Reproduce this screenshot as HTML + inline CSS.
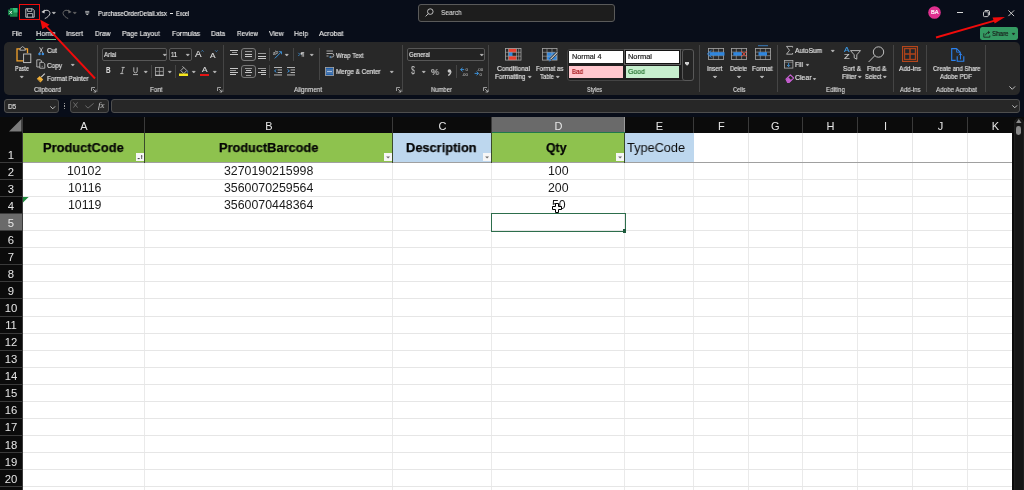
<!DOCTYPE html><html><head><meta charset="utf-8"><style>
html,body{margin:0;padding:0;}
body{width:1024px;height:490px;overflow:hidden;position:relative;background:#080d19;font-family:"Liberation Sans",sans-serif;}
.t{position:absolute;white-space:nowrap;line-height:1;transform-origin:0 0;will-change:transform;}
svg{position:absolute;overflow:visible;}
div{position:absolute;}
</style></head><body>
<svg style="left:8px;top:8px" width="9.5" height="9" viewBox="0 0 9.5 9"><rect x="2" y="0" width="7.5" height="8.8" rx="0.6" fill="#1c8a4c"/><path d="M5 0h3.9a0.6 0.6 0 0 1 0.6 0.6V4.4H5z" fill="#33c07a"/><rect x="0" y="1.6" width="5.4" height="5.6" rx="0.5" fill="#107c41"/><path d="M1.4 2.9l2.6 3M4 2.9l-2.6 3" stroke="#e8f5ec" stroke-width="0.85"/></svg>
<svg style="left:24.5px;top:8px" width="10" height="10" viewBox="0 0 10 10"><path d="M0.8 0.8h6.7l1.7 1.7v6.7H0.8z" fill="none" stroke="#d2d2d2" stroke-width="0.9"/><path d="M2.6 0.8v2.6h4.2V0.8" fill="none" stroke="#d2d2d2" stroke-width="0.8"/><path d="M2.3 9.2V5.6h5.4v3.6" fill="none" stroke="#d2d2d2" stroke-width="0.8"/></svg>
<div style="position:absolute;left:19.00px;top:3.50px;width:21.00px;height:16.00px;box-sizing:border-box;border:1.7px solid #f00b0b;"></div>
<svg style="left:41px;top:8.5px" width="10" height="10" viewBox="0 0 10 10"><path d="M2.8 2.2C5.6 0.2 9.2 1.6 8.9 4.6 8.6 6.6 6.4 8.4 3.8 9.6" fill="none" stroke="#d2d2d2" stroke-width="0.95"/><path d="M0.4 2.9L3.9 0.6 3.5 4.4z" fill="#d2d2d2"/></svg>
<svg style="left:52.4px;top:11.5px" width="4.1" height="2.4" viewBox="0 0 4.1 2.4"><path d="M0.2 0.3L3.50 0.3L1.85 2.1z" fill="#c8c8c8" stroke="#c8c8c8" stroke-width="0.5" stroke-linejoin="round"/></svg>
<svg style="left:61.5px;top:8.5px" width="10" height="10" viewBox="0 0 10 10"><path d="M7.2 2.2C4.4 0.2 0.8 1.6 1.1 4.6 1.4 6.6 3.6 8.4 6.2 9.6" fill="none" stroke="#6a6a6a" stroke-width="0.95"/><path d="M9.6 2.9L6.1 0.6 6.5 4.4z" fill="#6a6a6a"/></svg>
<svg style="left:73.1px;top:11.5px" width="3.9" height="2.4" viewBox="0 0 3.9 2.4"><path d="M0.2 0.3L3.30 0.3L1.75 2.1z" fill="#6a6a6a" stroke="#6a6a6a" stroke-width="0.5" stroke-linejoin="round"/></svg>
<svg style="left:84.7px;top:10.6px" width="4.5" height="4.5" viewBox="0 0 4.5 4.5"><path d="M0.2 0.4h4.1M0.2 1.8h4.1" stroke="#d8d8d8" stroke-width="0.75"/><path d="M0.6 2.7L2.25 4.3 3.9 2.7z" fill="#d8d8d8"/></svg>
<div class="t" style="left:98.00px;top:9.59px;font-size:7.0px;color:#e6e6e6;font-weight:normal;transform:scaleX(0.869);-webkit-text-stroke:0.18px #e6e6e6;">PurchaseOrderDetail.xlsx</div>
<div style="position:absolute;left:170.30px;top:13.20px;width:2.50px;height:0.80px;background:#e6e6e6;"></div>
<div class="t" style="left:176.00px;top:9.59px;font-size:7.0px;color:#e6e6e6;font-weight:normal;transform:scaleX(0.760);-webkit-text-stroke:0.18px #e6e6e6;">Excel</div>
<div style="position:absolute;left:418.00px;top:4.00px;width:196.50px;height:17.50px;box-sizing:border-box;border:1.2px solid #5a5a5a;border-radius:3px;background:#1d1d1d;"></div>
<svg style="left:424.8px;top:8.2px" width="9" height="9" viewBox="0 0 9 9"><circle cx="5.3" cy="3.6" r="2.8" fill="none" stroke="#cfcfcf" stroke-width="0.9"/><path d="M3.3 5.7L0.6 8.4" stroke="#cfcfcf" stroke-width="0.9"/></svg>
<div class="t" style="left:440.50px;top:8.79px;font-size:7.8px;color:#cfcfcf;font-weight:normal;transform:scaleX(0.842);-webkit-text-stroke:0.18px #cfcfcf;">Search</div>
<svg style="left:928px;top:6px" width="13" height="13" viewBox="0 0 13 13"><circle cx="6.5" cy="6.5" r="6.3" fill="#e0308f"/></svg>
<div class="t" style="left:930.80px;top:9.88px;font-size:5.5px;color:#fff;font-weight:normal;transform:scaleX(1.022);-webkit-text-stroke:0.18px #fff;">BA</div>
<div style="position:absolute;left:957.00px;top:12.20px;width:6.00px;height:0.90px;background:#d8d8d8;"></div>
<svg style="left:982.5px;top:9.5px" width="7" height="7" viewBox="0 0 7 7"><rect x="0.5" y="1.8" width="4.8" height="4.8" rx="0.9" fill="none" stroke="#d8d8d8" stroke-width="0.9"/><path d="M1.8 0.5h3.4a1.3 1.3 0 0 1 1.3 1.3v3.4" fill="none" stroke="#d8d8d8" stroke-width="0.9"/></svg>
<svg style="left:1008px;top:9.5px" width="6.5" height="6.5" viewBox="0 0 6.5 6.5"><path d="M0.4 0.4l5.7 5.7M6.1 0.4l-5.7 5.7" stroke="#d8d8d8" stroke-width="0.9"/></svg>
<div style="position:absolute;left:980.00px;top:27.00px;width:37.50px;height:13.00px;background:#359b63;border-radius:2.5px;"></div>
<svg style="left:982.5px;top:29.5px" width="8" height="8" viewBox="0 0 8 8"><path d="M0.8 3.2v4h6V5.5" fill="none" stroke="#1a1a1a" stroke-width="0.8"/><path d="M2.5 5.3C2.8 3.3 4.3 2.4 6.4 2.4M5 0.9l1.6 1.5L5 3.9" fill="none" stroke="#1a1a1a" stroke-width="0.8"/></svg>
<div class="t" style="left:991.50px;top:30.24px;font-size:7.4px;color:#1a1a1a;font-weight:normal;transform:scaleX(0.836);-webkit-text-stroke:0.18px #1a1a1a;">Share</div>
<svg style="left:1011.5px;top:33.199999999999996px" width="3.4" height="2.4" viewBox="0 0 3.4 2.4"><path d="M0.2 0.3L2.80 0.3L1.50 2.1z" fill="#1a1a1a" stroke="#1a1a1a" stroke-width="0.5" stroke-linejoin="round"/></svg>
<div class="t" style="left:12.00px;top:30.31px;font-size:7.6px;color:#e6e6e6;font-weight:normal;transform:scaleX(0.817);-webkit-text-stroke:0.18px #e6e6e6;">File</div>
<div class="t" style="left:36.00px;top:30.31px;font-size:7.6px;color:#e6e6e6;font-weight:normal;transform:scaleX(0.962);-webkit-text-stroke:0.18px #e6e6e6;">Home</div>
<div class="t" style="left:66.00px;top:30.31px;font-size:7.6px;color:#e6e6e6;font-weight:normal;transform:scaleX(0.894);-webkit-text-stroke:0.18px #e6e6e6;">Insert</div>
<div class="t" style="left:95.00px;top:30.31px;font-size:7.6px;color:#e6e6e6;font-weight:normal;transform:scaleX(0.873);-webkit-text-stroke:0.18px #e6e6e6;">Draw</div>
<div class="t" style="left:122.00px;top:30.31px;font-size:7.6px;color:#e6e6e6;font-weight:normal;transform:scaleX(0.890);-webkit-text-stroke:0.18px #e6e6e6;">Page Layout</div>
<div class="t" style="left:172.00px;top:30.31px;font-size:7.6px;color:#e6e6e6;font-weight:normal;transform:scaleX(0.890);-webkit-text-stroke:0.18px #e6e6e6;">Formulas</div>
<div class="t" style="left:211.00px;top:30.31px;font-size:7.6px;color:#e6e6e6;font-weight:normal;transform:scaleX(0.884);-webkit-text-stroke:0.18px #e6e6e6;">Data</div>
<div class="t" style="left:237.00px;top:30.31px;font-size:7.6px;color:#e6e6e6;font-weight:normal;transform:scaleX(0.842);-webkit-text-stroke:0.18px #e6e6e6;">Review</div>
<div class="t" style="left:268.60px;top:30.31px;font-size:7.6px;color:#e6e6e6;font-weight:normal;transform:scaleX(0.899);-webkit-text-stroke:0.18px #e6e6e6;">View</div>
<div class="t" style="left:294.00px;top:30.31px;font-size:7.6px;color:#e6e6e6;font-weight:normal;transform:scaleX(0.896);-webkit-text-stroke:0.18px #e6e6e6;">Help</div>
<div class="t" style="left:319.40px;top:30.31px;font-size:7.6px;color:#e6e6e6;font-weight:normal;transform:scaleX(0.935);-webkit-text-stroke:0.18px #e6e6e6;">Acrobat</div>
<div style="position:absolute;left:36.00px;top:38.50px;width:20.00px;height:1.30px;background:#6cbd8c;"></div>
<div style="position:absolute;left:4.00px;top:41.50px;width:1015.50px;height:53.00px;background:#282828;border-radius:5px;"></div>
<div style="position:absolute;left:97.00px;top:44.50px;width:1.00px;height:47.50px;background:#454545;"></div>
<div style="position:absolute;left:223.00px;top:44.50px;width:1.00px;height:47.50px;background:#454545;"></div>
<div style="position:absolute;left:402.00px;top:44.50px;width:1.00px;height:47.50px;background:#454545;"></div>
<div style="position:absolute;left:488.00px;top:44.50px;width:1.00px;height:47.50px;background:#454545;"></div>
<div style="position:absolute;left:699.00px;top:44.50px;width:1.00px;height:47.50px;background:#454545;"></div>
<div style="position:absolute;left:777.00px;top:44.50px;width:1.00px;height:47.50px;background:#454545;"></div>
<div style="position:absolute;left:892.50px;top:44.50px;width:1.00px;height:47.50px;background:#454545;"></div>
<div style="position:absolute;left:926.00px;top:44.50px;width:1.00px;height:47.50px;background:#454545;"></div>
<div style="position:absolute;left:985.00px;top:44.50px;width:1.00px;height:47.50px;background:#454545;"></div>
<div class="t" style="left:34.00px;top:86.29px;font-size:7.0px;color:#d6d6d6;font-weight:normal;transform:scaleX(0.901);-webkit-text-stroke:0.18px #d6d6d6;">Clipboard</div>
<div class="t" style="left:150.00px;top:86.29px;font-size:7.0px;color:#d6d6d6;font-weight:normal;transform:scaleX(0.892);-webkit-text-stroke:0.18px #d6d6d6;">Font</div>
<div class="t" style="left:294.00px;top:86.29px;font-size:7.0px;color:#d6d6d6;font-weight:normal;transform:scaleX(0.899);-webkit-text-stroke:0.18px #d6d6d6;">Alignment</div>
<div class="t" style="left:431.00px;top:86.29px;font-size:7.0px;color:#d6d6d6;font-weight:normal;transform:scaleX(0.843);-webkit-text-stroke:0.18px #d6d6d6;">Number</div>
<div class="t" style="left:587.00px;top:86.29px;font-size:7.0px;color:#d6d6d6;font-weight:normal;transform:scaleX(0.787);-webkit-text-stroke:0.18px #d6d6d6;">Styles</div>
<div class="t" style="left:732.50px;top:86.29px;font-size:7.0px;color:#d6d6d6;font-weight:normal;transform:scaleX(0.803);-webkit-text-stroke:0.18px #d6d6d6;">Cells</div>
<div class="t" style="left:826.00px;top:86.29px;font-size:7.0px;color:#d6d6d6;font-weight:normal;transform:scaleX(0.888);-webkit-text-stroke:0.18px #d6d6d6;">Editing</div>
<div class="t" style="left:899.50px;top:86.29px;font-size:7.0px;color:#d6d6d6;font-weight:normal;transform:scaleX(0.864);-webkit-text-stroke:0.18px #d6d6d6;">Add-ins</div>
<div class="t" style="left:935.50px;top:86.29px;font-size:7.0px;color:#d6d6d6;font-weight:normal;transform:scaleX(0.893);-webkit-text-stroke:0.18px #d6d6d6;">Adobe Acrobat</div>
<svg style="left:91px;top:87px" width="5.5" height="5.5" viewBox="0 0 5.5 5.5"><path d="M0.5 4V0.5H4" stroke="#b8b8b8" stroke-width="0.8" fill="none"/><path d="M1.8 1.8l3.2 3.2M5 2.6V5H2.6" stroke="#b8b8b8" stroke-width="0.8" fill="none"/></svg>
<svg style="left:217px;top:87px" width="5.5" height="5.5" viewBox="0 0 5.5 5.5"><path d="M0.5 4V0.5H4" stroke="#b8b8b8" stroke-width="0.8" fill="none"/><path d="M1.8 1.8l3.2 3.2M5 2.6V5H2.6" stroke="#b8b8b8" stroke-width="0.8" fill="none"/></svg>
<svg style="left:396px;top:87px" width="5.5" height="5.5" viewBox="0 0 5.5 5.5"><path d="M0.5 4V0.5H4" stroke="#b8b8b8" stroke-width="0.8" fill="none"/><path d="M1.8 1.8l3.2 3.2M5 2.6V5H2.6" stroke="#b8b8b8" stroke-width="0.8" fill="none"/></svg>
<svg style="left:483px;top:87px" width="5.5" height="5.5" viewBox="0 0 5.5 5.5"><path d="M0.5 4V0.5H4" stroke="#b8b8b8" stroke-width="0.8" fill="none"/><path d="M1.8 1.8l3.2 3.2M5 2.6V5H2.6" stroke="#b8b8b8" stroke-width="0.8" fill="none"/></svg>
<svg style="left:15px;top:45.5px" width="18" height="18" viewBox="0 0 18 18"><path d="M5.2 2.8H2v12h6.2" fill="none" stroke="#f3a32c" stroke-width="1.3"/><path d="M9.8 2.8H12.5v4.4" fill="none" stroke="#f3a32c" stroke-width="1.3"/><path d="M4.8 4.2l0.6-2 2.2-1.6 2.2 1.6 0.6 2z" fill="none" stroke="#c9c9c9" stroke-width="0.8"/><rect x="8.6" y="8" width="7.2" height="8.6" fill="#282828" stroke="#c9c9c9" stroke-width="0.9"/></svg>
<div class="t" style="left:15.00px;top:65.29px;font-size:7.0px;color:#e0e0e0;font-weight:normal;transform:scaleX(0.782);-webkit-text-stroke:0.18px #e0e0e0;">Paste</div>
<svg style="left:19.8px;top:76.2px" width="3.9" height="2.4" viewBox="0 0 3.9 2.4"><path d="M0.2 0.3L3.30 0.3L1.75 2.1z" fill="#c8c8c8" stroke="#c8c8c8" stroke-width="0.5" stroke-linejoin="round"/></svg>
<svg style="left:37.5px;top:46.5px" width="6.5" height="9" viewBox="0 0 6.5 9"><path d="M1.6 0.3l3.2 5.6M4.8 0.3L1.6 5.9" stroke="#cfcfcf" stroke-width="0.8"/><circle cx="1.5" cy="7" r="1.25" fill="#3a8ee0"/><circle cx="4.9" cy="7" r="1.25" fill="#3a8ee0"/></svg>
<div class="t" style="left:47.00px;top:47.39px;font-size:7.0px;color:#e0e0e0;font-weight:normal;transform:scaleX(0.918);-webkit-text-stroke:0.18px #e0e0e0;">Cut</div>
<svg style="left:35.8px;top:58.8px" width="10" height="10" viewBox="0 0 10 10"><path d="M0.8 0.8h3.6l1 1v6.2H0.8z" fill="none" stroke="#cfcfcf" stroke-width="0.8"/><path d="M3.8 3.3h3.4l1.6 1.6v4.3H3.8z" fill="#282828" stroke="#cfcfcf" stroke-width="0.8"/><path d="M6.2 6.8v1.3" stroke="#cfcfcf" stroke-width="0.6"/></svg>
<div class="t" style="left:47.00px;top:61.59px;font-size:7.0px;color:#e0e0e0;font-weight:normal;transform:scaleX(0.918);-webkit-text-stroke:0.18px #e0e0e0;">Copy</div>
<svg style="left:71px;top:63.6px" width="3.9" height="2.4" viewBox="0 0 3.9 2.4"><path d="M0.2 0.3L3.30 0.3L1.75 2.1z" fill="#c8c8c8" stroke="#c8c8c8" stroke-width="0.5" stroke-linejoin="round"/></svg>
<svg style="left:35.5px;top:72.5px" width="10" height="10" viewBox="0 0 10 10"><path d="M0.8 5.8l3-2.8 3.4 3.4-2.8 3z" fill="#f2b13a"/><path d="M1.6 6.6l3.2 1.4" stroke="#7a5a1a" stroke-width="0.5"/><path d="M5.2 4.2L8.8 0.6" stroke="#d0d0d0" stroke-width="1.1"/></svg>
<div class="t" style="left:47.00px;top:75.09px;font-size:7.0px;color:#e0e0e0;font-weight:normal;transform:scaleX(0.897);-webkit-text-stroke:0.18px #e0e0e0;">Format Painter</div>
<div style="position:absolute;left:102.00px;top:48.00px;width:65.00px;height:12.50px;box-sizing:border-box;border:1px solid #575757;border-radius:2px;background:#232323;"></div>
<div class="t" style="left:103.50px;top:50.56px;font-size:7.2px;color:#e0e0e0;font-weight:normal;transform:scaleX(0.868);-webkit-text-stroke:0.18px #e0e0e0;">Arial</div>
<svg style="left:162.5px;top:53.9px" width="3.9" height="2.4" viewBox="0 0 3.9 2.4"><path d="M0.2 0.3L3.30 0.3L1.75 2.1z" fill="#c8c8c8" stroke="#c8c8c8" stroke-width="0.5" stroke-linejoin="round"/></svg>
<div style="position:absolute;left:169.00px;top:48.00px;width:22.50px;height:12.50px;box-sizing:border-box;border:1px solid #575757;border-radius:2px;background:#232323;"></div>
<div class="t" style="left:170.50px;top:50.56px;font-size:7.2px;color:#e0e0e0;font-weight:normal;transform:scaleX(0.803);-webkit-text-stroke:0.18px #e0e0e0;">11</div>
<svg style="left:186.3px;top:53.9px" width="3.9" height="2.4" viewBox="0 0 3.9 2.4"><path d="M0.2 0.3L3.30 0.3L1.75 2.1z" fill="#c8c8c8" stroke="#c8c8c8" stroke-width="0.5" stroke-linejoin="round"/></svg>
<div class="t" style="left:194.50px;top:48.75px;font-size:9.6px;color:#d8d8d8;font-weight:normal;transform:scaleX(1.015);-webkit-text-stroke:0.18px #d8d8d8;">A</div>
<svg style="left:200.8px;top:50.3px" width="3" height="2" viewBox="0 0 3 2"><path d="M0.2 1.6L1.4 0.4 2.6 1.6" fill="none" stroke="#3d9be9" stroke-width="0.7"/></svg>
<div class="t" style="left:209.50px;top:51.51px;font-size:7.6px;color:#d8d8d8;font-weight:normal;transform:scaleX(1.085);-webkit-text-stroke:0.18px #d8d8d8;">A</div>
<svg style="left:215.2px;top:50.3px" width="3" height="2" viewBox="0 0 3 2"><path d="M0.2 0.4L1.4 1.6 2.6 0.4" fill="none" stroke="#3d9be9" stroke-width="0.7"/></svg>
<div class="t" style="left:106.00px;top:65.25px;font-size:9.6px;color:#d6d6d6;font-weight:bold;transform:scaleX(0.649);-webkit-text-stroke:0.18px #d6d6d6;">B</div>
<svg style="left:119.5px;top:66.5px" width="5" height="7" viewBox="0 0 5 7"><path d="M1.6 0.4h3.2M0.2 6.6h3.2M3.2 0.4L1.8 6.6" stroke="#d6d6d6" stroke-width="0.75" fill="none"/></svg>
<svg style="left:133px;top:66.5px" width="5" height="8.5" viewBox="0 0 5 8.5"><path d="M0.8 0.3v3.8a1.7 1.7 0 0 0 3.4 0V0.3" stroke="#d6d6d6" stroke-width="0.8" fill="none"/><path d="M0 7.6h5" stroke="#d6d6d6" stroke-width="0.8"/></svg>
<svg style="left:144.3px;top:71.10000000000001px" width="3.9" height="2.4" viewBox="0 0 3.9 2.4"><path d="M0.2 0.3L3.30 0.3L1.75 2.1z" fill="#c8c8c8" stroke="#c8c8c8" stroke-width="0.5" stroke-linejoin="round"/></svg>
<div style="position:absolute;left:151.00px;top:65.00px;width:1.00px;height:13.00px;background:#454545;"></div>
<svg style="left:155px;top:67px" width="9" height="9" viewBox="0 0 9 9"><rect x="0.5" y="0.5" width="7.8" height="7.8" fill="none" stroke="#a8a8a8" stroke-width="0.8"/><path d="M4.4 0.5v7.8M0.5 4.4h7.8" stroke="#a8a8a8" stroke-width="0.7"/><path d="M0.2 8.3h8.4" stroke="#d0d0d0" stroke-width="1"/></svg>
<svg style="left:167.8px;top:71.10000000000001px" width="3.9" height="2.4" viewBox="0 0 3.9 2.4"><path d="M0.2 0.3L3.30 0.3L1.75 2.1z" fill="#c8c8c8" stroke="#c8c8c8" stroke-width="0.5" stroke-linejoin="round"/></svg>
<div style="position:absolute;left:175.00px;top:65.00px;width:1.00px;height:13.00px;background:#454545;"></div>
<svg style="left:178.5px;top:66px" width="10" height="10.5" viewBox="0 0 10 10.5"><path d="M1.8 4.6l3-3.1 3 3-3 3.1z" fill="none" stroke="#cfcfcf" stroke-width="0.8"/><path d="M3.4 0.4l1.4 1.2" stroke="#cfcfcf" stroke-width="0.8"/><path d="M8.2 4.8c0.6 0.9 0.8 1.5 0.3 1.9" stroke="#3d9be9" stroke-width="0.8" fill="none"/><rect x="0" y="7.5" width="9" height="2.5" fill="#f4e61e"/></svg>
<svg style="left:191.5px;top:71.10000000000001px" width="3.9" height="2.4" viewBox="0 0 3.9 2.4"><path d="M0.2 0.3L3.30 0.3L1.75 2.1z" fill="#c8c8c8" stroke="#c8c8c8" stroke-width="0.5" stroke-linejoin="round"/></svg>
<div class="t" style="left:202.00px;top:65.99px;font-size:7.8px;color:#d6d6d6;font-weight:normal;transform:scaleX(1.057);-webkit-text-stroke:0.18px #d6d6d6;">A</div>
<div style="position:absolute;left:200.00px;top:73.50px;width:9.00px;height:2.50px;background:#e41515;"></div>
<svg style="left:213px;top:71.10000000000001px" width="3.9" height="2.4" viewBox="0 0 3.9 2.4"><path d="M0.2 0.3L3.30 0.3L1.75 2.1z" fill="#c8c8c8" stroke="#c8c8c8" stroke-width="0.5" stroke-linejoin="round"/></svg>
<div style="position:absolute;left:230.00px;top:49.80px;width:8.00px;height:0.90px;background:#c6c6c6;"></div>
<div style="position:absolute;left:231.50px;top:52.00px;width:5.00px;height:0.90px;background:#9a9a9a;"></div>
<div style="position:absolute;left:230.00px;top:54.20px;width:8.00px;height:0.90px;background:#c6c6c6;"></div>
<div style="position:absolute;left:241.00px;top:48.00px;width:14.50px;height:13.00px;box-sizing:border-box;border:1px solid #7a7a7a;border-radius:3px;background:#2e2e2e;"></div>
<div style="position:absolute;left:244.50px;top:51.30px;width:7.50px;height:0.90px;background:#9a9a9a;"></div>
<div style="position:absolute;left:244.50px;top:53.60px;width:7.50px;height:0.90px;background:#c6c6c6;"></div>
<div style="position:absolute;left:244.50px;top:55.90px;width:7.50px;height:0.90px;background:#c6c6c6;"></div>
<div style="position:absolute;left:258.00px;top:53.20px;width:8.00px;height:0.90px;background:#9a9a9a;"></div>
<div style="position:absolute;left:258.00px;top:55.50px;width:8.00px;height:0.90px;background:#c6c6c6;"></div>
<div style="position:absolute;left:258.00px;top:57.80px;width:8.00px;height:0.90px;background:#c6c6c6;"></div>
<div style="position:absolute;left:269.00px;top:48.00px;width:1.00px;height:13.00px;background:#454545;"></div>
<svg style="left:273px;top:49.5px" width="9.5" height="9" viewBox="0 0 9.5 9"><text x="0" y="4.6" font-size="5.2" fill="#cfcfcf" font-family="Liberation Sans" transform="rotate(-20 2 4)">ab</text><path d="M1.8 8.4L8.2 2" stroke="#3d9be9" stroke-width="0.9"/><path d="M5.8 1.6h2.7v2.7" fill="none" stroke="#3d9be9" stroke-width="0.8"/></svg>
<svg style="left:285px;top:53.9px" width="3.9" height="2.4" viewBox="0 0 3.9 2.4"><path d="M0.2 0.3L3.30 0.3L1.75 2.1z" fill="#c8c8c8" stroke="#c8c8c8" stroke-width="0.5" stroke-linejoin="round"/></svg>
<div style="position:absolute;left:293.00px;top:48.00px;width:1.00px;height:13.00px;background:#454545;"></div>
<svg style="left:298px;top:51.5px" width="7" height="5" viewBox="0 0 7 5"><path d="M0.3 0.8l1.6 1.6-1.6 1.6" fill="none" stroke="#3d9be9" stroke-width="0.8"/><path d="M4.2 0.5v4.3M5.6 0.5v4.3M3.4 0.5h2.8" stroke="#cfcfcf" stroke-width="0.7"/><circle cx="3.6" cy="1.6" r="1.1" fill="#cfcfcf"/></svg>
<svg style="left:310px;top:53.9px" width="3.9" height="2.4" viewBox="0 0 3.9 2.4"><path d="M0.2 0.3L3.30 0.3L1.75 2.1z" fill="#c8c8c8" stroke="#c8c8c8" stroke-width="0.5" stroke-linejoin="round"/></svg>
<div style="position:absolute;left:318.50px;top:47.50px;width:1.00px;height:32.50px;background:#454545;"></div>
<svg style="left:325.5px;top:50px" width="8" height="9" viewBox="0 0 8 9"><path d="M0.5 1h6.5M0.5 3.5h5.5a1.8 1.8 0 0 1 0 3.6H4" fill="none" stroke="#c9c9c9" stroke-width="0.8"/><path d="M0.5 6h2" stroke="#c9c9c9" stroke-width="0.8"/><path d="M4.8 5.9L3.6 7.1l1.2 1.2" fill="none" stroke="#3d9be9" stroke-width="0.8"/></svg>
<div class="t" style="left:335.50px;top:51.59px;font-size:7.0px;color:#e0e0e0;font-weight:normal;transform:scaleX(0.880);-webkit-text-stroke:0.18px #e0e0e0;">Wrap Text</div>
<div style="position:absolute;left:230.00px;top:67.50px;width:8.00px;height:0.90px;background:#c6c6c6;"></div>
<div style="position:absolute;left:230.00px;top:69.80px;width:5.50px;height:0.90px;background:#9a9a9a;"></div>
<div style="position:absolute;left:230.00px;top:72.10px;width:8.00px;height:0.90px;background:#c6c6c6;"></div>
<div style="position:absolute;left:230.00px;top:74.40px;width:5.50px;height:0.90px;background:#c6c6c6;"></div>
<div style="position:absolute;left:241.00px;top:65.00px;width:14.50px;height:13.00px;box-sizing:border-box;border:1px solid #7a7a7a;border-radius:3px;background:#2e2e2e;"></div>
<div style="position:absolute;left:244.50px;top:67.80px;width:7.50px;height:0.90px;background:#9a9a9a;"></div>
<div style="position:absolute;left:245.50px;top:70.10px;width:5.50px;height:0.90px;background:#c6c6c6;"></div>
<div style="position:absolute;left:244.50px;top:72.40px;width:7.50px;height:0.90px;background:#c6c6c6;"></div>
<div style="position:absolute;left:245.50px;top:74.70px;width:5.50px;height:0.90px;background:#9a9a9a;"></div>
<div style="position:absolute;left:258.00px;top:67.50px;width:8.00px;height:0.90px;background:#9a9a9a;"></div>
<div style="position:absolute;left:260.50px;top:69.80px;width:5.50px;height:0.90px;background:#c6c6c6;"></div>
<div style="position:absolute;left:258.00px;top:72.10px;width:8.00px;height:0.90px;background:#c6c6c6;"></div>
<div style="position:absolute;left:260.50px;top:74.40px;width:5.50px;height:0.90px;background:#c6c6c6;"></div>
<div style="position:absolute;left:269.00px;top:65.00px;width:1.00px;height:13.00px;background:#454545;"></div>
<svg style="left:273.5px;top:67px" width="8.5" height="9" viewBox="0 0 8.5 9"><rect x="0" y="0" width="8" height="0.9" fill="#c6c6c6"/><rect x="3.6" y="2.5" width="4.4" height="0.9" fill="#c6c6c6"/><rect x="3.6" y="5" width="4.4" height="0.9" fill="#c6c6c6"/><rect x="0" y="7.5" width="8" height="0.9" fill="#c6c6c6"/><path d="M2.4 2.4L0.5 3.9l1.9 1.5" fill="none" stroke="#3d9be9" stroke-width="0.9"/></svg>
<svg style="left:287px;top:67px" width="8.5" height="9" viewBox="0 0 8.5 9"><rect x="0" y="0" width="8" height="0.9" fill="#c6c6c6"/><rect x="3.6" y="2.5" width="4.4" height="0.9" fill="#c6c6c6"/><rect x="3.6" y="5" width="4.4" height="0.9" fill="#c6c6c6"/><rect x="0" y="7.5" width="8" height="0.9" fill="#c6c6c6"/><path d="M0.5 2.4l1.9 1.5-1.9 1.5" fill="none" stroke="#3d9be9" stroke-width="0.9"/></svg>
<svg style="left:324.5px;top:67px" width="9" height="9" viewBox="0 0 9 9"><rect x="0.4" y="0.4" width="8.2" height="8.2" fill="#1d5fae" stroke="#a8a8a8" stroke-width="0.8"/><path d="M0.4 3h8.2M0.4 6h8.2" stroke="#a8a8a8" stroke-width="0.6"/><path d="M1.8 4.5h5.4" stroke="#e8e8e8" stroke-width="0.7"/></svg>
<div class="t" style="left:336.00px;top:68.09px;font-size:7.0px;color:#e0e0e0;font-weight:normal;transform:scaleX(0.901);-webkit-text-stroke:0.18px #e0e0e0;">Merge &amp; Center</div>
<svg style="left:390px;top:71.4px" width="3.9" height="2.4" viewBox="0 0 3.9 2.4"><path d="M0.2 0.3L3.30 0.3L1.75 2.1z" fill="#c8c8c8" stroke="#c8c8c8" stroke-width="0.5" stroke-linejoin="round"/></svg>
<div style="position:absolute;left:407.00px;top:48.00px;width:77.50px;height:12.50px;box-sizing:border-box;border:1px solid #575757;border-radius:2px;background:#232323;"></div>
<div class="t" style="left:409.00px;top:51.09px;font-size:7.0px;color:#e0e0e0;font-weight:normal;transform:scaleX(0.843);-webkit-text-stroke:0.18px #e0e0e0;">General</div>
<svg style="left:480px;top:53.9px" width="3.9" height="2.4" viewBox="0 0 3.9 2.4"><path d="M0.2 0.3L3.30 0.3L1.75 2.1z" fill="#c8c8c8" stroke="#c8c8c8" stroke-width="0.5" stroke-linejoin="round"/></svg>
<div class="t" style="left:411.00px;top:65.97px;font-size:10.2px;color:#c9c9c9;font-weight:normal;transform:scaleX(0.705);">$</div>
<svg style="left:421.5px;top:71.4px" width="3.9" height="2.4" viewBox="0 0 3.9 2.4"><path d="M0.2 0.3L3.30 0.3L1.75 2.1z" fill="#c8c8c8" stroke="#c8c8c8" stroke-width="0.5" stroke-linejoin="round"/></svg>
<div class="t" style="left:431.00px;top:66.75px;font-size:9.6px;color:#c9c9c9;font-weight:normal;transform:scaleX(0.937);-webkit-text-stroke:0.18px #c9c9c9;">%</div>
<svg style="left:447px;top:69px" width="5" height="7" viewBox="0 0 5 7"><circle cx="2.4" cy="2" r="1.8" fill="#c9c9c9"/><path d="M4 2.2C4 4.2 3 5.6 1.2 6.5" stroke="#c9c9c9" stroke-width="1.1" fill="none"/></svg>
<div style="position:absolute;left:456.00px;top:65.00px;width:1.00px;height:12.50px;background:#454545;"></div>
<svg style="left:460px;top:67px" width="10" height="9" viewBox="0 0 10 9"><path d="M2.6 0.8L0.6 2.6l2 1.8M0.6 2.6h3.6" fill="none" stroke="#3d9be9" stroke-width="0.9"/><text x="5.6" y="4.1" font-size="4.4" fill="#c9c9c9" font-family="Liberation Sans">0</text><text x="1.8" y="8.7" font-size="4.4" fill="#c9c9c9" font-family="Liberation Sans">.00</text></svg>
<svg style="left:474px;top:67px" width="10" height="9" viewBox="0 0 10 9"><text x="3" y="4.1" font-size="4.4" fill="#c9c9c9" font-family="Liberation Sans">.00</text><path d="M0.6 6.4h3.6M2.6 4.6l2 1.8-2 1.8" fill="none" stroke="#3d9be9" stroke-width="0.9"/><text x="5.6" y="8.7" font-size="4.4" fill="#c9c9c9" font-family="Liberation Sans">0</text></svg>
<svg style="left:505px;top:48px" width="16.5" height="12.5" viewBox="0 0 16.5 12.5"><rect x="3.5" y="0.4" width="8" height="4" fill="#e8402f"/><rect x="3.5" y="4.2" width="4" height="4" fill="#2f86de"/><rect x="3.5" y="8.1" width="8" height="4" fill="#e8402f"/><rect x="0.4" y="0.4" width="15.6" height="11.7" fill="none" stroke="#a8a8a8" stroke-width="0.8"/><path d="M0.4 4.3h15.6M0.4 8.2h15.6M3.5 0.4v11.7M11.5 0.4v11.7M13.7 0.4v11.7" stroke="#a8a8a8" stroke-width="0.6"/></svg>
<div class="t" style="left:496.50px;top:64.89px;font-size:7.0px;color:#e0e0e0;font-weight:normal;transform:scaleX(0.942);-webkit-text-stroke:0.18px #e0e0e0;">Conditional</div>
<div class="t" style="left:495.00px;top:73.29px;font-size:7.0px;color:#e0e0e0;font-weight:normal;transform:scaleX(0.912);-webkit-text-stroke:0.18px #e0e0e0;">Formatting</div>
<svg style="left:527.5px;top:75.9px" width="3.9" height="2.4" viewBox="0 0 3.9 2.4"><path d="M0.2 0.3L3.30 0.3L1.75 2.1z" fill="#c8c8c8" stroke="#c8c8c8" stroke-width="0.5" stroke-linejoin="round"/></svg>
<svg style="left:542px;top:48px" width="17" height="15" viewBox="0 0 17 15"><rect x="5" y="4.2" width="10" height="7.8" fill="#2f86de"/><rect x="0.4" y="0.4" width="14.6" height="11.7" fill="none" stroke="#a8a8a8" stroke-width="0.8"/><path d="M0.4 4.3h14.6M0.4 8.2h14.6M5 0.4v11.7M10 0.4v11.7" stroke="#a8a8a8" stroke-width="0.6"/><path d="M15.6 4.2L8.2 11.6" stroke="#292929" stroke-width="2.6"/><path d="M15.4 4.4L8.4 11.4" stroke="#d0d0d0" stroke-width="1.2"/><path d="M8.6 11.2l-2.2 2.8 2.9-1.9z" fill="#3a8ee0"/></svg>
<div class="t" style="left:536.00px;top:64.89px;font-size:7.0px;color:#e0e0e0;font-weight:normal;transform:scaleX(0.873);-webkit-text-stroke:0.18px #e0e0e0;">Format as</div>
<div class="t" style="left:540.00px;top:73.29px;font-size:7.0px;color:#e0e0e0;font-weight:normal;transform:scaleX(0.836);-webkit-text-stroke:0.18px #e0e0e0;">Table</div>
<svg style="left:556.3px;top:75.9px" width="3.9" height="2.4" viewBox="0 0 3.9 2.4"><path d="M0.2 0.3L3.30 0.3L1.75 2.1z" fill="#c8c8c8" stroke="#c8c8c8" stroke-width="0.5" stroke-linejoin="round"/></svg>
<div style="position:absolute;left:566.50px;top:48.50px;width:127.00px;height:32.00px;box-sizing:border-box;border:1px solid #444;border-radius:3px;background:#1f1f1f;"></div>
<div style="position:absolute;left:569.00px;top:50.50px;width:53.50px;height:12.50px;background:#fff;"></div>
<div class="t" style="left:571.50px;top:53.06px;font-size:7.2px;color:#1a1a1a;font-weight:normal;transform:scaleX(1.010);-webkit-text-stroke:0.18px #1a1a1a;">Normal 4</div>
<div style="position:absolute;left:624.00px;top:48.50px;width:56.50px;height:16.00px;box-sizing:border-box;border:1.6px solid #5e5e5e;background:#141414;"></div>
<div style="position:absolute;left:626.00px;top:50.50px;width:53.00px;height:12.00px;background:#fff;"></div>
<div class="t" style="left:628.00px;top:53.06px;font-size:7.2px;color:#1a1a1a;font-weight:normal;transform:scaleX(1.034);-webkit-text-stroke:0.18px #1a1a1a;">Normal</div>
<div style="position:absolute;left:569.00px;top:66.00px;width:53.50px;height:12.00px;background:#ffc7ce;"></div>
<div class="t" style="left:572.00px;top:68.06px;font-size:7.2px;color:#9c0006;font-weight:normal;transform:scaleX(0.859);-webkit-text-stroke:0.18px #9c0006;">Bad</div>
<div style="position:absolute;left:626.00px;top:66.00px;width:53.00px;height:12.00px;background:#c6efce;"></div>
<div class="t" style="left:628.00px;top:68.06px;font-size:7.2px;color:#1f6e2a;font-weight:normal;transform:scaleX(0.965);-webkit-text-stroke:0.18px #1f6e2a;">Good</div>
<div style="position:absolute;left:681.50px;top:48.50px;width:12.00px;height:32.00px;box-sizing:border-box;border:1px solid #585858;border-radius:3px;background:#242424;"></div>
<div style="position:absolute;left:685.00px;top:61.60px;width:4.20px;height:0.80px;background:#d0d0d0;"></div>
<div style="position:absolute;left:685.00px;top:63.00px;width:4.20px;height:0.80px;background:#d0d0d0;"></div>
<svg style="left:685px;top:64.2px" width="4.2" height="2" viewBox="0 0 4.2 2"><path d="M0.3 0L3.9 0 2.1 1.8z" fill="#d0d0d0"/></svg>
<svg style="left:707.5px;top:48px" width="16" height="12" viewBox="0 0 16 12"><rect x="0.4" y="0.4" width="15.2" height="11.2" fill="none" stroke="#a8a8a8" stroke-width="0.8"/><path d="M0.4 4.1h15.2M0.4 7.7h15.2M5.3 0.4v11.2M10.6 0.4v11.2" stroke="#a8a8a8" stroke-width="0.6"/><rect x="1.5" y="4.2" width="15" height="3.4" fill="#2f86de"/><path d="M3.5 2.2L-0.6 5.9 3.5 9.6" fill="none" stroke="#2f86de" stroke-width="1"/></svg>
<div class="t" style="left:707.00px;top:65.09px;font-size:7.0px;color:#e0e0e0;font-weight:normal;transform:scaleX(0.885);-webkit-text-stroke:0.18px #e0e0e0;">Insert</div>
<svg style="left:713px;top:76.2px" width="4.4" height="2.4" viewBox="0 0 4.4 2.4"><path d="M0.2 0.3L3.80 0.3L2.00 2.1z" fill="#c8c8c8" stroke="#c8c8c8" stroke-width="0.5" stroke-linejoin="round"/></svg>
<svg style="left:731px;top:48px" width="16" height="12" viewBox="0 0 16 12"><rect x="0.4" y="0.4" width="15.2" height="11.2" fill="none" stroke="#a8a8a8" stroke-width="0.8"/><path d="M0.4 4.1h15.2M0.4 7.7h15.2M5.3 0.4v11.2M10.6 0.4v11.2" stroke="#a8a8a8" stroke-width="0.6"/><rect x="2.3" y="4.2" width="8.3" height="3.4" fill="#2f86de"/><path d="M10.2 3l5.6 6M15.8 3l-5.6 6" stroke="#e0453a" stroke-width="0.9"/></svg>
<div class="t" style="left:730.00px;top:65.09px;font-size:7.0px;color:#e0e0e0;font-weight:normal;transform:scaleX(0.840);-webkit-text-stroke:0.18px #e0e0e0;">Delete</div>
<svg style="left:736.5px;top:76.2px" width="4.4" height="2.4" viewBox="0 0 4.4 2.4"><path d="M0.2 0.3L3.80 0.3L2.00 2.1z" fill="#c8c8c8" stroke="#c8c8c8" stroke-width="0.5" stroke-linejoin="round"/></svg>
<svg style="left:754.5px;top:48px" width="16" height="12" viewBox="0 0 16 12"><rect x="0.4" y="0.4" width="15.2" height="11.2" fill="none" stroke="#a8a8a8" stroke-width="0.8"/><path d="M0.4 4.1h15.2M0.4 7.7h15.2M5.3 0.4v11.2M10.6 0.4v11.2" stroke="#a8a8a8" stroke-width="0.6"/><rect x="3.5" y="4.2" width="8.5" height="3.4" fill="#2f86de"/><path d="M3 -2.3h10" stroke="#3a8ee0" stroke-width="0.8"/></svg>
<div class="t" style="left:752.00px;top:65.09px;font-size:7.0px;color:#e0e0e0;font-weight:normal;transform:scaleX(0.925);-webkit-text-stroke:0.18px #e0e0e0;">Format</div>
<svg style="left:760px;top:76.2px" width="4.4" height="2.4" viewBox="0 0 4.4 2.4"><path d="M0.2 0.3L3.80 0.3L2.00 2.1z" fill="#c8c8c8" stroke="#c8c8c8" stroke-width="0.5" stroke-linejoin="round"/></svg>
<svg style="left:785.5px;top:46px" width="7" height="8.5" viewBox="0 0 7 8.5"><path d="M6.6 1.5V0.4H0.5l3 3.9-3 3.9h6.1V7" fill="none" stroke="#cfcfcf" stroke-width="0.8"/></svg>
<div class="t" style="left:795.00px;top:46.69px;font-size:7.0px;color:#e0e0e0;font-weight:normal;transform:scaleX(0.938);-webkit-text-stroke:0.18px #e0e0e0;">AutoSum</div>
<svg style="left:831px;top:50.199999999999996px" width="3.9" height="2.4" viewBox="0 0 3.9 2.4"><path d="M0.2 0.3L3.30 0.3L1.75 2.1z" fill="#c8c8c8" stroke="#c8c8c8" stroke-width="0.5" stroke-linejoin="round"/></svg>
<svg style="left:784px;top:60px" width="9.5" height="8.5" viewBox="0 0 9.5 8.5"><rect x="0.4" y="0.4" width="8.5" height="7.7" fill="none" stroke="#b0b0b0" stroke-width="0.8"/><path d="M0.4 2.2h8.5" stroke="#b0b0b0" stroke-width="0.6"/><path d="M4.6 3v3.5M3 5l1.6 1.6L6.2 5" fill="none" stroke="#3d9be9" stroke-width="0.8"/></svg>
<div class="t" style="left:795.00px;top:61.09px;font-size:7.0px;color:#e0e0e0;font-weight:normal;transform:scaleX(0.895);-webkit-text-stroke:0.18px #e0e0e0;">Fill</div>
<svg style="left:805.5px;top:63.9px" width="3.4" height="2.4" viewBox="0 0 3.4 2.4"><path d="M0.2 0.3L2.80 0.3L1.50 2.1z" fill="#c8c8c8" stroke="#c8c8c8" stroke-width="0.5" stroke-linejoin="round"/></svg>
<svg style="left:784.5px;top:73.5px" width="9.5" height="8.5" viewBox="0 0 9.5 8.5"><path d="M1 5.2L5.4 0.8 8.6 4 4.2 8.4 2.6 8.4z" fill="none" stroke="#c65fd0" stroke-width="1.1" stroke-linejoin="round"/><path d="M1 5.2L4.2 8.4 2.6 8.4z M1.2 5.4l2.2-2.2 3.2 3.2-2.2 2.2z" fill="#c65fd0"/></svg>
<div class="t" style="left:795.00px;top:74.29px;font-size:7.0px;color:#e0e0e0;font-weight:normal;transform:scaleX(0.986);-webkit-text-stroke:0.18px #e0e0e0;">Clear</div>
<svg style="left:812.5px;top:77.9px" width="3.4" height="2.4" viewBox="0 0 3.4 2.4"><path d="M0.2 0.3L2.80 0.3L1.50 2.1z" fill="#c8c8c8" stroke="#c8c8c8" stroke-width="0.5" stroke-linejoin="round"/></svg>
<div class="t" style="left:844.00px;top:46.01px;font-size:7.6px;color:#3d9be9;font-weight:normal;transform:scaleX(1.085);-webkit-text-stroke:0.18px #3d9be9;">A</div>
<div class="t" style="left:844.20px;top:53.16px;font-size:8.0px;color:#cfcfcf;font-weight:normal;transform:scaleX(1.146);-webkit-text-stroke:0.18px #cfcfcf;">Z</div>
<svg style="left:849.5px;top:49.5px" width="11" height="10" viewBox="0 0 11 10"><path d="M0.5 0.6h10L6.8 4.8V9.2L4.2 7.8V4.8z" fill="none" stroke="#cfcfcf" stroke-width="0.85"/></svg>
<div class="t" style="left:843.00px;top:65.09px;font-size:7.0px;color:#e0e0e0;font-weight:normal;transform:scaleX(0.925);-webkit-text-stroke:0.18px #e0e0e0;">Sort &amp;</div>
<div class="t" style="left:842.00px;top:73.39px;font-size:7.0px;color:#e0e0e0;font-weight:normal;transform:scaleX(0.932);-webkit-text-stroke:0.18px #e0e0e0;">Filter</div>
<svg style="left:857.8px;top:75.9px" width="3.9" height="2.4" viewBox="0 0 3.9 2.4"><path d="M0.2 0.3L3.30 0.3L1.75 2.1z" fill="#c8c8c8" stroke="#c8c8c8" stroke-width="0.5" stroke-linejoin="round"/></svg>
<svg style="left:867.5px;top:45.5px" width="17" height="17" viewBox="0 0 17 17"><circle cx="10.5" cy="6" r="5.2" fill="none" stroke="#cfcfcf" stroke-width="0.9"/><path d="M6.8 9.7L0.6 16" stroke="#cfcfcf" stroke-width="0.9"/></svg>
<div class="t" style="left:866.50px;top:65.09px;font-size:7.0px;color:#e0e0e0;font-weight:normal;transform:scaleX(0.964);-webkit-text-stroke:0.18px #e0e0e0;">Find &amp;</div>
<div class="t" style="left:865.00px;top:73.39px;font-size:7.0px;color:#e0e0e0;font-weight:normal;transform:scaleX(0.848);-webkit-text-stroke:0.18px #e0e0e0;">Select</div>
<svg style="left:883px;top:75.9px" width="3.9" height="2.4" viewBox="0 0 3.9 2.4"><path d="M0.2 0.3L3.30 0.3L1.75 2.1z" fill="#c8c8c8" stroke="#c8c8c8" stroke-width="0.5" stroke-linejoin="round"/></svg>
<svg style="left:902px;top:46px" width="16" height="16" viewBox="0 0 16 16"><rect x="0.6" y="0.6" width="14.8" height="14.8" fill="none" stroke="#b4461c" stroke-width="1.2"/><rect x="2" y="2" width="12" height="12" fill="#a9421b"/><rect x="1.5" y="1.5" width="13" height="13" fill="none" stroke="#3c2a20" stroke-width="0.5"/><rect x="3.2" y="3.2" width="4" height="4" fill="#20262c"/><rect x="8.8" y="3.2" width="4" height="4" fill="#20262c"/><rect x="3.2" y="8.8" width="4" height="4" fill="#20262c"/><rect x="8.8" y="8.8" width="4" height="4" fill="#20262c"/></svg>
<div class="t" style="left:899.00px;top:65.09px;font-size:7.0px;color:#e0e0e0;font-weight:normal;transform:scaleX(0.927);-webkit-text-stroke:0.18px #e0e0e0;">Add-ins</div>
<svg style="left:950.5px;top:48px" width="13.5" height="14" viewBox="0 0 13.5 14"><path d="M5.8 0.6H0.7v11.8h4" fill="none" stroke="#2b82f0" stroke-width="1.1"/><path d="M5.6 0.6l3.6 3.6V7" fill="none" stroke="#2b82f0" stroke-width="1.1"/><path d="M5.6 0.6v3.6h3.6" fill="none" stroke="#2b82f0" stroke-width="0.8"/><path d="M6.2 8.2v5h6.6v-5" fill="none" stroke="#2b82f0" stroke-width="1.1"/><path d="M9.5 11.4V5.8M7.9 7.3l1.6-1.6 1.6 1.6" fill="none" stroke="#2b82f0" stroke-width="0.95"/></svg>
<div class="t" style="left:932.50px;top:65.09px;font-size:7.0px;color:#e0e0e0;font-weight:normal;transform:scaleX(0.860);-webkit-text-stroke:0.18px #e0e0e0;">Create and Share</div>
<div class="t" style="left:940.00px;top:73.29px;font-size:7.0px;color:#e0e0e0;font-weight:normal;transform:scaleX(0.884);-webkit-text-stroke:0.18px #e0e0e0;">Adobe PDF</div>
<svg style="left:1009px;top:85.5px" width="6.5" height="3.8" viewBox="0 0 6.5 3.8"><path d="M0.4 0.4l2.85 2.9 2.85-2.9" fill="none" stroke="#cfcfcf" stroke-width="0.9"/></svg>
<div style="position:absolute;left:4.00px;top:99.00px;width:54.50px;height:14.00px;box-sizing:border-box;border:1px solid #4e4e4e;border-radius:3px;background:#272727;"></div>
<div class="t" style="left:8.00px;top:103.06px;font-size:7.2px;color:#e0e0e0;font-weight:normal;transform:scaleX(0.869);-webkit-text-stroke:0.18px #e0e0e0;">D5</div>
<svg style="left:50px;top:105.5px" width="5.5" height="3.3" viewBox="0 0 5.5 3.3"><path d="M0.4 0.4l2.35 2.4 2.35-2.4" fill="none" stroke="#cfcfcf" stroke-width="0.9"/></svg>
<div style="position:absolute;left:63.50px;top:103.00px;width:1.30px;height:1.30px;background:#9a9a9a;"></div>
<div style="position:absolute;left:63.50px;top:105.30px;width:1.30px;height:1.30px;background:#9a9a9a;"></div>
<div style="position:absolute;left:63.50px;top:107.60px;width:1.30px;height:1.30px;background:#9a9a9a;"></div>
<div style="position:absolute;left:69.50px;top:99.00px;width:39.00px;height:13.50px;box-sizing:border-box;border:1px solid #4e4e4e;border-radius:3px;background:#272727;"></div>
<svg style="left:72.8px;top:102px" width="5" height="6" viewBox="0 0 5 6"><path d="M0.4 0.4l4.2 5.2M4.6 0.4L0.4 5.6" stroke="#7a7a7a" stroke-width="0.8"/></svg>
<svg style="left:84.5px;top:103px" width="9" height="5.5" viewBox="0 0 9 5.5"><path d="M0.4 2.6l2.6 2.5L8.6 0.4" fill="none" stroke="#7a7a7a" stroke-width="0.8"/></svg>
<div class="t" style="left:97.8px;top:101.3px;font-size:9.2px;color:#d2d2d2;font-family:'Liberation Serif';font-style:italic;transform:scaleX(0.95)">fx</div>
<div style="position:absolute;left:111.00px;top:99.00px;width:908.50px;height:14.00px;box-sizing:border-box;border:1px solid #4e4e4e;border-radius:3px;background:#272727;"></div>
<svg style="left:1012px;top:104.5px" width="5.5" height="3.3" viewBox="0 0 5.5 3.3"><path d="M0.4 0.4l2.35 2.4 2.35-2.4" fill="none" stroke="#cfcfcf" stroke-width="0.9"/></svg>
<div style="position:absolute;left:22.50px;top:133.00px;width:989.80px;height:357.00px;background:#fff;"></div>
<div style="position:absolute;left:0.00px;top:116.50px;width:1013.00px;height:16.50px;background:#0b0b0b;"></div>
<div style="position:absolute;left:491.50px;top:116.50px;width:133.00px;height:16.50px;background:#6a6a6a;"></div>
<svg style="left:9px;top:119px" width="12.5" height="12.5" viewBox="0 0 12.5 12.5"><path d="M12.5 0V12.5H0z" fill="#7b7b7b"/></svg>
<div style="position:absolute;left:144.00px;top:117.00px;width:1.00px;height:16.00px;background:#3a3a3a;"></div>
<div style="position:absolute;left:392.00px;top:117.00px;width:1.00px;height:16.00px;background:#3a3a3a;"></div>
<div style="position:absolute;left:491.00px;top:117.00px;width:1.00px;height:16.00px;background:#3a3a3a;"></div>
<div style="position:absolute;left:624.00px;top:117.00px;width:1.00px;height:16.00px;background:#3a3a3a;"></div>
<div style="position:absolute;left:693.00px;top:117.00px;width:1.00px;height:16.00px;background:#3a3a3a;"></div>
<div style="position:absolute;left:747.50px;top:117.00px;width:1.00px;height:16.00px;background:#3a3a3a;"></div>
<div style="position:absolute;left:802.00px;top:117.00px;width:1.00px;height:16.00px;background:#3a3a3a;"></div>
<div style="position:absolute;left:857.00px;top:117.00px;width:1.00px;height:16.00px;background:#3a3a3a;"></div>
<div style="position:absolute;left:912.00px;top:117.00px;width:1.00px;height:16.00px;background:#3a3a3a;"></div>
<div style="position:absolute;left:967.00px;top:117.00px;width:1.00px;height:16.00px;background:#3a3a3a;"></div>
<div style="position:absolute;left:623.60px;top:117.00px;width:1.10px;height:15.00px;background:#9a9a9a;"></div>
<div style="position:absolute;left:22.00px;top:117.00px;width:1.00px;height:16.50px;background:#3a3a3a;"></div>
<div style="position:absolute;left:0.00px;top:132.50px;width:22.50px;height:1.00px;background:#3a3a3a;"></div>
<div class="t" style="left:22.5px;top:120.6px;width:122.0px;text-align:center;font-size:11px;color:#e6e6e6;">A</div>
<div class="t" style="left:144.5px;top:120.6px;width:248.0px;text-align:center;font-size:11px;color:#e6e6e6;">B</div>
<div class="t" style="left:392.5px;top:120.6px;width:99.0px;text-align:center;font-size:11px;color:#e6e6e6;">C</div>
<div class="t" style="left:491.5px;top:120.6px;width:133.0px;text-align:center;font-size:11px;color:#e6e6e6;">D</div>
<div class="t" style="left:624.5px;top:120.6px;width:69.0px;text-align:center;font-size:11px;color:#e6e6e6;">E</div>
<div class="t" style="left:693.5px;top:120.6px;width:54.5px;text-align:center;font-size:11px;color:#e6e6e6;">F</div>
<div class="t" style="left:748px;top:120.6px;width:54.5px;text-align:center;font-size:11px;color:#e6e6e6;">G</div>
<div class="t" style="left:802.5px;top:120.6px;width:55.0px;text-align:center;font-size:11px;color:#e6e6e6;">H</div>
<div class="t" style="left:857.5px;top:120.6px;width:55.0px;text-align:center;font-size:11px;color:#e6e6e6;">I</div>
<div class="t" style="left:912.5px;top:120.6px;width:55.0px;text-align:center;font-size:11px;color:#e6e6e6;">J</div>
<div class="t" style="left:967.5px;top:120.6px;width:55.0px;text-align:center;font-size:11px;color:#e6e6e6;">K</div>
<div style="position:absolute;left:0.00px;top:133.00px;width:22.50px;height:357.00px;background:#0b0b0b;"></div>
<div style="position:absolute;left:22.00px;top:133.00px;width:1.00px;height:357.00px;background:#3a3a3a;"></div>
<div style="position:absolute;left:0.00px;top:213.68px;width:22.00px;height:17.06px;background:#6a6a6a;"></div>
<div style="position:absolute;left:0.00px;top:162.00px;width:22.00px;height:1.00px;background:#3a3a3a;"></div>
<div class="t" style="left:-0.5px;top:149.50px;width:22px;text-align:center;font-size:11.3px;color:#e6e6e6;">1</div>
<div style="position:absolute;left:0.00px;top:179.06px;width:22.00px;height:1.00px;background:#3a3a3a;"></div>
<div class="t" style="left:-0.5px;top:166.56px;width:22px;text-align:center;font-size:11.3px;color:#e6e6e6;">2</div>
<div style="position:absolute;left:0.00px;top:196.12px;width:22.00px;height:1.00px;background:#3a3a3a;"></div>
<div class="t" style="left:-0.5px;top:183.62px;width:22px;text-align:center;font-size:11.3px;color:#e6e6e6;">3</div>
<div style="position:absolute;left:0.00px;top:213.18px;width:22.00px;height:1.00px;background:#3a3a3a;"></div>
<div class="t" style="left:-0.5px;top:200.68px;width:22px;text-align:center;font-size:11.3px;color:#e6e6e6;">4</div>
<div style="position:absolute;left:0.00px;top:230.24px;width:22.00px;height:1.00px;background:#3a3a3a;"></div>
<div class="t" style="left:-0.5px;top:217.74px;width:22px;text-align:center;font-size:11.3px;color:#e6e6e6;">5</div>
<div style="position:absolute;left:0.00px;top:247.30px;width:22.00px;height:1.00px;background:#3a3a3a;"></div>
<div class="t" style="left:-0.5px;top:234.80px;width:22px;text-align:center;font-size:11.3px;color:#e6e6e6;">6</div>
<div style="position:absolute;left:0.00px;top:264.36px;width:22.00px;height:1.00px;background:#3a3a3a;"></div>
<div class="t" style="left:-0.5px;top:251.86px;width:22px;text-align:center;font-size:11.3px;color:#e6e6e6;">7</div>
<div style="position:absolute;left:0.00px;top:281.42px;width:22.00px;height:1.00px;background:#3a3a3a;"></div>
<div class="t" style="left:-0.5px;top:268.92px;width:22px;text-align:center;font-size:11.3px;color:#e6e6e6;">8</div>
<div style="position:absolute;left:0.00px;top:298.48px;width:22.00px;height:1.00px;background:#3a3a3a;"></div>
<div class="t" style="left:-0.5px;top:285.98px;width:22px;text-align:center;font-size:11.3px;color:#e6e6e6;">9</div>
<div style="position:absolute;left:0.00px;top:315.54px;width:22.00px;height:1.00px;background:#3a3a3a;"></div>
<div class="t" style="left:-0.5px;top:303.04px;width:22px;text-align:center;font-size:11.3px;color:#e6e6e6;">10</div>
<div style="position:absolute;left:0.00px;top:332.60px;width:22.00px;height:1.00px;background:#3a3a3a;"></div>
<div class="t" style="left:-0.5px;top:320.10px;width:22px;text-align:center;font-size:11.3px;color:#e6e6e6;">11</div>
<div style="position:absolute;left:0.00px;top:349.66px;width:22.00px;height:1.00px;background:#3a3a3a;"></div>
<div class="t" style="left:-0.5px;top:337.16px;width:22px;text-align:center;font-size:11.3px;color:#e6e6e6;">12</div>
<div style="position:absolute;left:0.00px;top:366.72px;width:22.00px;height:1.00px;background:#3a3a3a;"></div>
<div class="t" style="left:-0.5px;top:354.22px;width:22px;text-align:center;font-size:11.3px;color:#e6e6e6;">13</div>
<div style="position:absolute;left:0.00px;top:383.78px;width:22.00px;height:1.00px;background:#3a3a3a;"></div>
<div class="t" style="left:-0.5px;top:371.28px;width:22px;text-align:center;font-size:11.3px;color:#e6e6e6;">14</div>
<div style="position:absolute;left:0.00px;top:400.84px;width:22.00px;height:1.00px;background:#3a3a3a;"></div>
<div class="t" style="left:-0.5px;top:388.34px;width:22px;text-align:center;font-size:11.3px;color:#e6e6e6;">15</div>
<div style="position:absolute;left:0.00px;top:417.90px;width:22.00px;height:1.00px;background:#3a3a3a;"></div>
<div class="t" style="left:-0.5px;top:405.40px;width:22px;text-align:center;font-size:11.3px;color:#e6e6e6;">16</div>
<div style="position:absolute;left:0.00px;top:434.96px;width:22.00px;height:1.00px;background:#3a3a3a;"></div>
<div class="t" style="left:-0.5px;top:422.46px;width:22px;text-align:center;font-size:11.3px;color:#e6e6e6;">17</div>
<div style="position:absolute;left:0.00px;top:452.02px;width:22.00px;height:1.00px;background:#3a3a3a;"></div>
<div class="t" style="left:-0.5px;top:439.52px;width:22px;text-align:center;font-size:11.3px;color:#e6e6e6;">18</div>
<div style="position:absolute;left:0.00px;top:469.08px;width:22.00px;height:1.00px;background:#3a3a3a;"></div>
<div class="t" style="left:-0.5px;top:456.58px;width:22px;text-align:center;font-size:11.3px;color:#e6e6e6;">19</div>
<div style="position:absolute;left:0.00px;top:486.14px;width:22.00px;height:1.00px;background:#3a3a3a;"></div>
<div class="t" style="left:-0.5px;top:473.64px;width:22px;text-align:center;font-size:11.3px;color:#e6e6e6;">20</div>
<div style="position:absolute;left:22.50px;top:133.00px;width:370.00px;height:29.50px;background:#8ec24e;"></div>
<div style="position:absolute;left:392.50px;top:133.00px;width:99.00px;height:29.50px;background:#bdd7ee;"></div>
<div style="position:absolute;left:491.50px;top:133.00px;width:133.00px;height:29.50px;background:#8ec24e;"></div>
<div style="position:absolute;left:624.50px;top:133.00px;width:69.00px;height:29.50px;background:#bdd7ee;"></div>
<div style="position:absolute;left:491.50px;top:132.00px;width:133.00px;height:1.20px;background:#217a4a;"></div>
<div style="position:absolute;left:144.00px;top:133.00px;width:1.00px;height:29.50px;background:#3a4a2c;"></div>
<div style="position:absolute;left:144.00px;top:162.50px;width:1.00px;height:327.50px;background:#eaeaea;"></div>
<div style="position:absolute;left:392.00px;top:133.00px;width:1.00px;height:29.50px;background:#3a4a2c;"></div>
<div style="position:absolute;left:392.00px;top:162.50px;width:1.00px;height:327.50px;background:#eaeaea;"></div>
<div style="position:absolute;left:491.00px;top:133.00px;width:1.00px;height:29.50px;background:#3a4a2c;"></div>
<div style="position:absolute;left:491.00px;top:162.50px;width:1.00px;height:327.50px;background:#eaeaea;"></div>
<div style="position:absolute;left:624.00px;top:133.00px;width:1.00px;height:29.50px;background:#3a4a2c;"></div>
<div style="position:absolute;left:624.00px;top:162.50px;width:1.00px;height:327.50px;background:#eaeaea;"></div>
<div style="position:absolute;left:693.00px;top:162.50px;width:1.00px;height:327.50px;background:#eaeaea;"></div>
<div style="position:absolute;left:747.50px;top:133.00px;width:1.00px;height:29.50px;background:#e6e6e6;"></div>
<div style="position:absolute;left:747.50px;top:162.50px;width:1.00px;height:327.50px;background:#eaeaea;"></div>
<div style="position:absolute;left:802.00px;top:133.00px;width:1.00px;height:29.50px;background:#e6e6e6;"></div>
<div style="position:absolute;left:802.00px;top:162.50px;width:1.00px;height:327.50px;background:#eaeaea;"></div>
<div style="position:absolute;left:857.00px;top:133.00px;width:1.00px;height:29.50px;background:#e6e6e6;"></div>
<div style="position:absolute;left:857.00px;top:162.50px;width:1.00px;height:327.50px;background:#eaeaea;"></div>
<div style="position:absolute;left:912.00px;top:133.00px;width:1.00px;height:29.50px;background:#e6e6e6;"></div>
<div style="position:absolute;left:912.00px;top:162.50px;width:1.00px;height:327.50px;background:#eaeaea;"></div>
<div style="position:absolute;left:967.00px;top:133.00px;width:1.00px;height:29.50px;background:#e6e6e6;"></div>
<div style="position:absolute;left:967.00px;top:162.50px;width:1.00px;height:327.50px;background:#eaeaea;"></div>
<div style="position:absolute;left:22.50px;top:161.90px;width:989.80px;height:1.30px;background:#a0a0a0;"></div>
<div style="position:absolute;left:22.50px;top:179.06px;width:989.80px;height:1.00px;background:#e6e6e6;"></div>
<div style="position:absolute;left:22.50px;top:196.12px;width:989.80px;height:1.00px;background:#e6e6e6;"></div>
<div style="position:absolute;left:22.50px;top:213.18px;width:989.80px;height:1.00px;background:#e6e6e6;"></div>
<div style="position:absolute;left:22.50px;top:230.24px;width:989.80px;height:1.00px;background:#e6e6e6;"></div>
<div style="position:absolute;left:22.50px;top:247.30px;width:989.80px;height:1.00px;background:#e6e6e6;"></div>
<div style="position:absolute;left:22.50px;top:264.36px;width:989.80px;height:1.00px;background:#e6e6e6;"></div>
<div style="position:absolute;left:22.50px;top:281.42px;width:989.80px;height:1.00px;background:#e6e6e6;"></div>
<div style="position:absolute;left:22.50px;top:298.48px;width:989.80px;height:1.00px;background:#e6e6e6;"></div>
<div style="position:absolute;left:22.50px;top:315.54px;width:989.80px;height:1.00px;background:#e6e6e6;"></div>
<div style="position:absolute;left:22.50px;top:332.60px;width:989.80px;height:1.00px;background:#e6e6e6;"></div>
<div style="position:absolute;left:22.50px;top:349.66px;width:989.80px;height:1.00px;background:#e6e6e6;"></div>
<div style="position:absolute;left:22.50px;top:366.72px;width:989.80px;height:1.00px;background:#e6e6e6;"></div>
<div style="position:absolute;left:22.50px;top:383.78px;width:989.80px;height:1.00px;background:#e6e6e6;"></div>
<div style="position:absolute;left:22.50px;top:400.84px;width:989.80px;height:1.00px;background:#e6e6e6;"></div>
<div style="position:absolute;left:22.50px;top:417.90px;width:989.80px;height:1.00px;background:#e6e6e6;"></div>
<div style="position:absolute;left:22.50px;top:434.96px;width:989.80px;height:1.00px;background:#e6e6e6;"></div>
<div style="position:absolute;left:22.50px;top:452.02px;width:989.80px;height:1.00px;background:#e6e6e6;"></div>
<div style="position:absolute;left:22.50px;top:469.08px;width:989.80px;height:1.00px;background:#e6e6e6;"></div>
<div style="position:absolute;left:22.50px;top:486.14px;width:989.80px;height:1.00px;background:#e6e6e6;"></div>
<div class="t" style="left:43.30px;top:141.01px;font-size:13.0px;color:#050505;font-weight:bold;transform:scaleX(0.989);-webkit-text-stroke:0.25px #050505;">ProductCode</div>
<div class="t" style="left:218.50px;top:141.01px;font-size:13.0px;color:#050505;font-weight:bold;transform:scaleX(0.982);-webkit-text-stroke:0.25px #050505;">ProductBarcode</div>
<div class="t" style="left:406.40px;top:141.01px;font-size:13.0px;color:#050505;font-weight:bold;transform:scaleX(0.987);-webkit-text-stroke:0.25px #050505;">Description</div>
<div class="t" style="left:545.80px;top:141.01px;font-size:13.0px;color:#050505;font-weight:bold;transform:scaleX(0.946);-webkit-text-stroke:0.25px #050505;">Qty</div>
<div class="t" style="left:627.10px;top:141.41px;font-size:13.0px;color:#0c0c0c;font-weight:normal;transform:scaleX(0.980);">TypeCode</div>
<svg style="left:135.8px;top:153px" width="8.2" height="8" viewBox="0 0 8.2 8"><rect x="0" y="0" width="8.2" height="8" fill="#f6f6f6"/><path d="M1.7 5.6h2" stroke="#3a3a3a" stroke-width="1"/><path d="M5.7 6V2.4" stroke="#4a4a4a" stroke-width="0.9"/><path d="M4.8 3.2l0.9-1.1 0.9 1.1z" fill="#4a4a4a"/></svg>
<svg style="left:383.8px;top:153px" width="8.2" height="8" viewBox="0 0 8.2 8"><rect x="0" y="0" width="8.2" height="8" fill="#f6f6f6"/><path d="M2.1 3.5h4L4.1 5.6z" fill="#6a6a6a"/></svg>
<svg style="left:482.8px;top:153px" width="8.2" height="8" viewBox="0 0 8.2 8"><rect x="0" y="0" width="8.2" height="8" fill="#f6f6f6"/><path d="M2.1 3.5h4L4.1 5.6z" fill="#6a6a6a"/></svg>
<svg style="left:615.8px;top:153px" width="8.2" height="8" viewBox="0 0 8.2 8"><rect x="0" y="0" width="8.2" height="8" fill="#f6f6f6"/><path d="M2.1 3.5h4L4.1 5.6z" fill="#6a6a6a"/></svg>
<div style="position:absolute;left:144.00px;top:150.00px;width:1.00px;height:12.50px;background:#3a4a2c;"></div>
<div style="position:absolute;left:392.00px;top:150.00px;width:1.00px;height:12.50px;background:#3a4a2c;"></div>
<div style="position:absolute;left:491.00px;top:150.00px;width:1.00px;height:12.50px;background:#3a4a2c;"></div>
<div style="position:absolute;left:624.00px;top:150.00px;width:1.00px;height:12.50px;background:#3a4a2c;"></div>
<div class="t" style="left:67.06px;top:165.14px;font-size:12px;color:#1a1a1a;transform:scaleX(1.03);">10102</div>
<div class="t" style="left:224.47px;top:165.14px;font-size:12px;color:#1a1a1a;transform:scaleX(1.03);">3270190215998</div>
<div class="t" style="left:548.49px;top:165.14px;font-size:12px;color:#1a1a1a;transform:scaleX(1.03);">100</div>
<div class="t" style="left:67.52px;top:182.24px;font-size:12px;color:#1a1a1a;transform:scaleX(1.03);">10116</div>
<div class="t" style="left:224.47px;top:182.24px;font-size:12px;color:#1a1a1a;transform:scaleX(1.03);">3560070259564</div>
<div class="t" style="left:548.49px;top:182.24px;font-size:12px;color:#1a1a1a;transform:scaleX(1.03);">200</div>
<div class="t" style="left:67.52px;top:199.44px;font-size:12px;color:#1a1a1a;transform:scaleX(1.03);">10119</div>
<div class="t" style="left:224.47px;top:199.44px;font-size:12px;color:#1a1a1a;transform:scaleX(1.03);">3560070448364</div>
<div class="t" style="left:551.93px;top:199.44px;font-size:12px;color:#1a1a1a;transform:scaleX(1.03);">50</div>
<svg style="left:23px;top:196.92000000000002px" width="6" height="6" viewBox="0 0 6 6"><path d="M0 0h5.6L0 5.6z" fill="#1e8a3e"/></svg>
<div style="position:absolute;left:491.00px;top:212.88px;width:134.50px;height:18.66px;box-sizing:border-box;border:1.6px solid #2d6e4c;"></div>
<div style="position:absolute;left:622.60px;top:229.14px;width:3.60px;height:3.40px;background:#1e5a3c;"></div>
<svg style="left:551.5px;top:202.5px" width="10" height="9.5" viewBox="0 0 10 9.5"><path d="M3.5 0.5h3v3h3v3h-3v3h-3v-3h-3v-3h3z" fill="#fff" stroke="#000" stroke-width="1"/></svg>
<div style="position:absolute;left:1012.30px;top:116.50px;width:11.70px;height:373.50px;background:#0b0b0b;"></div>
<div style="position:absolute;left:1014.00px;top:117.50px;width:10.00px;height:373.50px;background:#161616;border-radius:5px 5px 0 0;box-sizing:border-box;border:1px solid #1e1e1e;"></div>
<svg style="left:1015.6px;top:119px" width="5.5" height="4" viewBox="0 0 5.5 4"><path d="M2.75 0.1L5.5 3.9H0z" fill="#8a8a8a"/></svg>
<div style="position:absolute;left:1016.00px;top:125.80px;width:4.80px;height:9.20px;background:#8a8a8a;border-radius:2.4px;"></div>
<svg style="left:0;top:0" width="1024" height="490" viewBox="0 0 1024 490"><path d="M95 78.5L45.5 25.6" stroke="#f00b0b" stroke-width="1.9" fill="none"/><path d="M40.3 19.7L42.3 29.2L49.6 24.8z" fill="#f00b0b"/><path d="M936 37.5L996.5 20.2" stroke="#f00b0b" stroke-width="1.9" fill="none"/><path d="M1005 17L992.5 17.6L994.7 23.6z" fill="#f00b0b"/></svg>
</body></html>
